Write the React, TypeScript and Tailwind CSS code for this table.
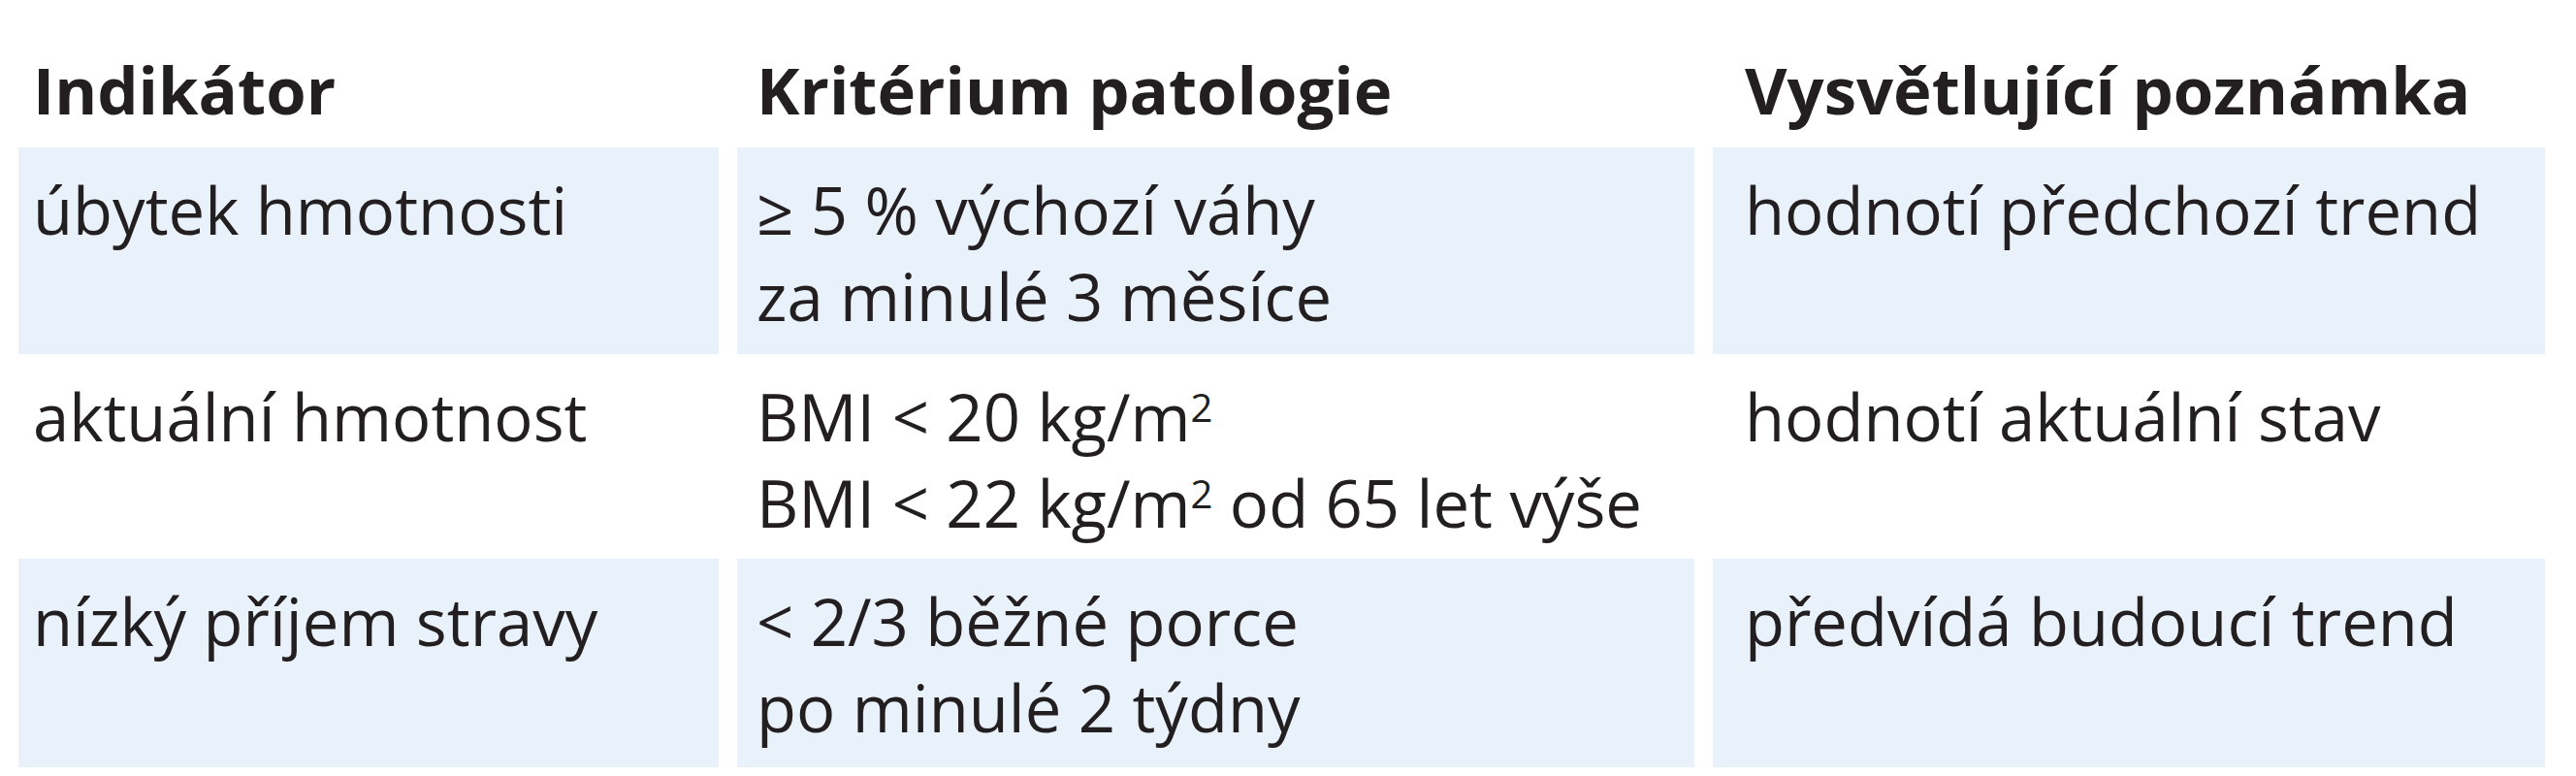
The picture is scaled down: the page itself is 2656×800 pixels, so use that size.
const rows = [
  {
    h: 'h-[213px]',
    bg: true,
    a: ['úbytek hmotnosti'],
    b: [<>≥ 5 % výchozí váhy</>, <>za minulé 3 měsíce</>],
    c: 'hodnotí předchozí trend',
  },
  {
    h: 'h-[211px]',
    bg: false,
    a: ['aktuální hmotnost'],
    b: [
      <>BMI &lt; 20 kg/m<sup className="text-[40px]">2</sup></>,
      <>BMI &lt; 22 kg/m<sup className="text-[40px]">2</sup> od 65 let výše</>,
    ],
    c: 'hodnotí aktuální stav',
  },
  {
    h: 'h-[215px]',
    bg: true,
    a: ['nízký příjem stravy'],
    b: [<>&lt; 2/3 běžné porce</>, <>po minulé 2 týdny</>],
    c: 'předvídá budoucí trend',
  },
];

export default function App() {
  return (
    <div
      className="w-[2656px] h-[800px] bg-white text-[#231f20] text-[67px] leading-[89px] px-[19px]"
      style={{ fontFamily: '"Open Sans", "Noto Sans", sans-serif' }}
    >
      {/* Header */}
      <div className="flex gap-[19px] h-[152px] pt-[48px] font-bold">
        <div className="w-[722px] pl-[15px]">Indikátor</div>
        <div className="w-[987px] pl-[20px]">Kritérium patologie</div>
        <div className="w-[858px] pl-[33px]">Vysvětlující poznámka</div>
      </div>

      {rows.map((r, i) => (
        <div key={i} className={`flex gap-[19px] ${r.h}`}>
          <div className={`w-[722px] pl-[15px] pt-[20px] ${r.bg ? 'bg-[#e9f1fb]' : ''}`}>
            {r.a.map((t, j) => (
              <div key={j}>{t}</div>
            ))}
          </div>
          <div className={`w-[987px] pl-[20px] pt-[20px] ${r.bg ? 'bg-[#e9f1fb]' : ''}`}>
            {r.b.map((t, j) => (
              <div key={j}>{t}</div>
            ))}
          </div>
          <div className={`w-[858px] pl-[33px] pt-[20px] ${r.bg ? 'bg-[#e9f1fb]' : ''}`}>
            {r.c}
          </div>
        </div>
      ))}
    </div>
  );
}
